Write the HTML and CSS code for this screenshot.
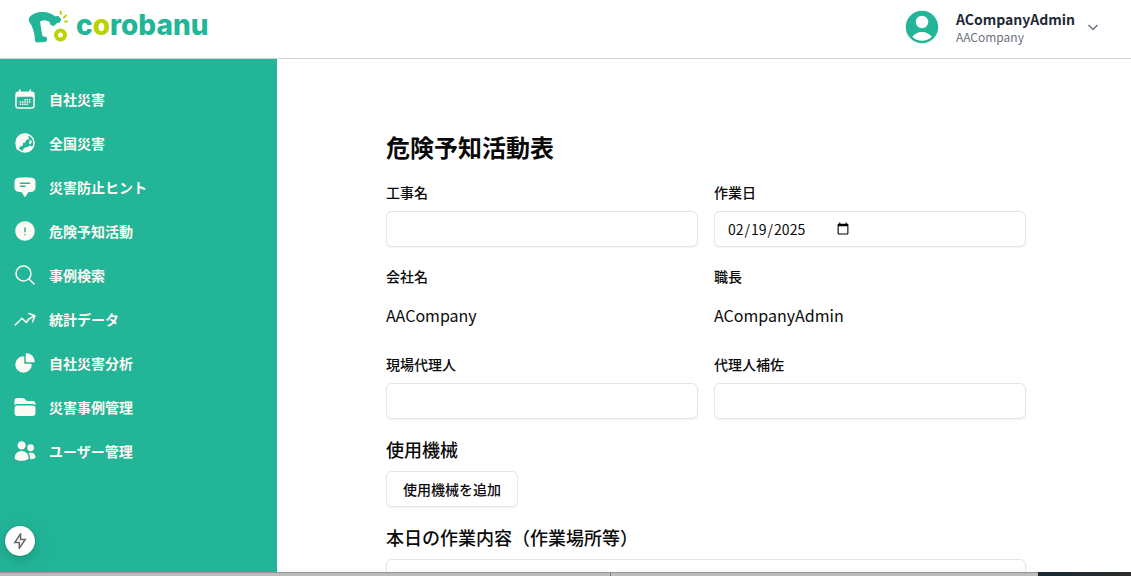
FILE: index.html
```html
<!DOCTYPE html>
<html lang="ja">
<head>
  <meta charset="UTF-8">
  <meta name="viewport" content="width=device-width, initial-scale=1">
  <title>危険予知活動表 - corobanu</title>
  <link rel="stylesheet" href="styles.css">
</head>
<body>

  <header class="header">
    <a class="logo" href="#">
      <svg class="logo-mark" viewBox="0 0 40 34" aria-hidden="true">
        <path d="M1.500 8 C5 3.500 9 2.500 15 2.500 C20 2.500 24 4.500 27 7 L30 6.500 L32.500 9.500 L31.500 12 L28.500 12.500 L25.500 15.500 L23 14.500 L22 11.500 C18.500 9 13.500 9 11.500 11.500 C12 17 13 22 14 26.500 L18 27.500 L18.500 30 L17 31.500 L8.500 32 L7.500 30.500 C7.500 24 5 16 1.500 11 Z" fill="#22b598" stroke="#22b598" stroke-width="1.200" stroke-linejoin="round"/>
        <circle cx="32.500" cy="25" r="4.500" fill="none" stroke="#b9d300" stroke-width="4"/>
        <path d="M32.500 1.500l.5 2.500M38 5.500l-2 2M39 11.500h-2" stroke="#b9d300" stroke-width="1.800" stroke-linecap="round"/>
      </svg>
      <span class="logo-text">c<span class="lime">o</span>robanu</span>
    </a>
    <button class="account" type="button">
      <svg class="avatar" viewBox="0 0 24 24" aria-hidden="true"><path fill-rule="evenodd" d="M18.685 19.097A9.723 9.723 0 0 0 21.75 12c0-5.385-4.365-9.75-9.75-9.75S2.25 6.615 2.25 12a9.723 9.723 0 0 0 3.065 7.097A9.716 9.716 0 0 0 12 21.75a9.716 9.716 0 0 0 6.685-2.653Zm-12.54-1.285A7.486 7.486 0 0 1 12 15a7.486 7.486 0 0 1 5.855 2.812A8.224 8.224 0 0 1 12 20.25a8.224 8.224 0 0 1-5.855-2.438ZM15.75 9a3.75 3.75 0 1 1-7.5 0 3.75 3.75 0 0 1 7.5 0Z"/></svg>
      <span class="account-text">
        <span class="account-name">ACompanyAdmin</span>
        <span class="account-company">AACompany</span>
      </span>
      <svg class="chevron" viewBox="0 0 12 12" aria-hidden="true"><path d="M1.500 4 6 8.500 10.500 4"/></svg>
    </button>
  </header>

  <div class="layout">
    <nav class="sidebar">
      <a class="nav-link" href="#">
        <svg class="icon" viewBox="0 0 24 24"><path fill-rule="evenodd" d="M6 3a.75.75 0 0 1 1.500 0v1.500h9V3A.75.75 0 0 1 18 3v1.500h.75a3 3 0 0 1 3 3v11.250a3 3 0 0 1-3 3H5.250a3 3 0 0 1-3-3V7.500a3 3 0 0 1 3-3H6ZM5.250 9.750a1.500 1.500 0 0 0-1.500 1.500v7.500a1.500 1.500 0 0 0 1.500 1.500h13.500a1.500 1.500 0 0 0 1.500-1.500v-7.500a1.500 1.500 0 0 0-1.500-1.500Z"/><path d="M11.300 12h1.500v1.500h-1.500zM13.600 12h1.500v1.500h-1.500zM15.900 12h1.500v1.500h-1.500zM6.700 14.300h1.500v1.500H6.700zM9 14.300h1.500v1.500H9zM11.300 14.300h1.500v1.500h-1.500zM13.600 14.300h1.500v1.500h-1.500zM15.900 14.300h1.500v1.500h-1.500zM6.700 16.600h1.500v1.500H6.700zM9 16.600h1.500v1.500H9zM11.300 16.600h1.500v1.500h-1.500zM13.600 16.600h1.500v1.500h-1.500z"/></svg>
        自社災害
      </a>
      <a class="nav-link" href="#">
        <svg class="icon" viewBox="0 0 24 24"><circle class="line" cx="12" cy="12" r="9"/><path d="M3 11C3 6 7 2.500 12 2.500l3 .5 1 1.500-1 2 1.500.5-1 1.500-2.500.5-.5 2.500-2.500.5-.5 3-2.500.5-1 2.500-2.500 1C3.500 16.500 3 14 3 11Z"/><path d="M16.500 9.500l1.500-.5 1 2-1.500 2.500-1.500-1ZM12 16.500l3-.5 1.500-1.500 2 1 1.500.5-1.500 2.500-3 2-3.500.8-2.500-2.300Z"/></svg>
        全国災害
      </a>
      <a class="nav-link" href="#">
        <svg class="icon" viewBox="0 0 24 24"><path fill-rule="evenodd" d="M4.848 2.771A49.144 49.144 0 0 1 12 2.250c2.430 0 4.817.178 7.152.52 1.978.292 3.348 2.024 3.348 3.970v6.020c0 1.946-1.370 3.678-3.348 3.970a48.901 48.901 0 0 1-3.476.383.39.39 0 0 0-.297.17l-2.755 4.133a.75.75 0 0 1-1.248 0l-2.755-4.133a.39.39 0 0 0-.297-.17 48.900 48.900 0 0 1-3.476-.384c-1.978-.29-3.348-2.024-3.348-3.970V6.741c0-1.946 1.370-3.680 3.348-3.970ZM6.750 8.250a.75.75 0 0 1 .75-.75h9a.75.75 0 0 1 0 1.500h-9a.75.75 0 0 1-.75-.75Zm.75 2.250a.75.75 0 0 0 0 1.500H12a.75.75 0 0 0 0-1.500H7.500Z"/></svg>
        災害防止ヒント
      </a>
      <a class="nav-link" href="#">
        <svg class="icon" viewBox="0 0 24 24"><path fill-rule="evenodd" d="M2.250 12c0-5.385 4.365-9.750 9.750-9.750s9.750 4.365 9.750 9.750-4.365 9.750-9.750 9.750S2.250 17.385 2.250 12ZM12 8.250a.75.75 0 0 1 .75.75v3.750a.75.75 0 0 1-1.500 0V9a.75.75 0 0 1 .75-.75Zm0 8.250a.75.75 0 1 0 0-1.500.75.75 0 0 0 0 1.500Z"/></svg>
        危険予知活動
      </a>
      <a class="nav-link" href="#">
        <svg class="icon" viewBox="0 0 24 24"><path class="line" d="m21 21-5.197-5.197m0 0A7.500 7.500 0 1 0 5.196 5.196a7.500 7.500 0 0 0 10.607 10.607Z"/></svg>
        事例検索
      </a>
      <a class="nav-link" href="#">
        <svg class="icon" viewBox="0 0 24 24"><path class="line" d="M2.250 18 9 11.250l4.306 4.306a11.950 11.950 0 0 1 5.814-5.518l2.740-1.220m0 0-5.940-2.281m5.940 2.280-2.280 5.941"/></svg>
        統計データ
      </a>
      <a class="nav-link" href="#">
        <svg class="icon" viewBox="0 0 24 24"><path d="M2.250 13.500a8.250 8.250 0 0 1 8.250-8.250.75.75 0 0 1 .75.75v6.750H18a.75.75 0 0 1 .75.75 8.250 8.250 0 0 1-16.500 0Z"/><path d="M12.750 3a.75.75 0 0 1 .75-.75 8.250 8.250 0 0 1 8.250 8.250.75.75 0 0 1-.75.75h-7.500a.75.75 0 0 1-.75-.75V3Z"/></svg>
        自社災害分析
      </a>
      <a class="nav-link" href="#">
        <svg class="icon" viewBox="0 0 24 24"><path d="M19.500 21a3 3 0 0 0 3-3v-4.500a3 3 0 0 0-3-3h-15a3 3 0 0 0-3 3V18a3 3 0 0 0 3 3h15ZM1.500 10.146V6a3 3 0 0 1 3-3h5.379a2.250 2.250 0 0 1 1.590.659l2.122 2.121c.14.141.331.22.53.22H19.500a3 3 0 0 1 3 3v1.146A4.483 4.483 0 0 0 19.500 9h-15a4.483 4.483 0 0 0-3 1.146Z"/></svg>
        災害事例管理
      </a>
      <a class="nav-link" href="#">
        <svg class="icon" viewBox="0 0 24 24"><path d="M4.500 6.375a4.125 4.125 0 1 1 8.250 0 4.125 4.125 0 0 1-8.250 0ZM14.250 8.625a3.375 3.375 0 1 1 6.750 0 3.375 3.375 0 0 1-6.750 0ZM1.500 19.125a7.125 7.125 0 0 1 14.250 0v.003l-.001.119a.75.75 0 0 1-.363.63 13.067 13.067 0 0 1-6.761 1.873c-2.472 0-4.786-.684-6.760-1.873a.75.75 0 0 1-.364-.63l-.001-.122ZM17.250 19.128l-.001.144a2.250 2.250 0 0 1-.233.96 10.088 10.088 0 0 0 5.060-1.010.75.75 0 0 0 .42-.643 4.875 4.875 0 0 0-6.957-4.611 8.586 8.586 0 0 1 1.710 5.157v.003Z"/></svg>
        ユーザー管理
      </a>
    </nav>

    <main class="main">
      <form class="form">
        <h1>危険予知活動表</h1>
        <div class="fields">
          <div class="field">
            <label for="work-name">工事名</label>
            <input class="input" id="work-name" type="text">
          </div>
          <div class="field">
            <label for="work-date">作業日</label>
            <input class="input" id="work-date" type="date" value="2025-02-19">
          </div>
          <div class="field">
            <span class="label">会社名</span>
            <p class="value">AACompany</p>
          </div>
          <div class="field">
            <span class="label">職長</span>
            <p class="value">ACompanyAdmin</p>
          </div>
          <div class="field">
            <label for="agent">現場代理人</label>
            <input class="input" id="agent" type="text">
          </div>
          <div class="field">
            <label for="assistant">代理人補佐</label>
            <input class="input" id="assistant" type="text">
          </div>
        </div>
        <section class="field">
          <h2>使用機械</h2>
          <button class="btn" type="button">使用機械を追加</button>
        </section>
        <section class="field">
          <h2 id="today-work">本日の作業内容（作業場所等）</h2>
          <textarea class="input textarea" aria-labelledby="today-work"></textarea>
        </section>
      </form>
    </main>
  </div>

  <div class="bottom-strip">
    <span class="strip-left"></span>
    <span class="strip-mid"></span>
    <span class="strip-dark"></span>
  </div>

  <button class="dev-btn" type="button" aria-label="開発ツール">
    <svg viewBox="0 0 16 16" aria-hidden="true"><path d="M8.500 .8 2.800 9.500H7.300V15.200L13.200 6.500H8.500Z"/></svg>
  </button>

</body>
</html>
```
FILE: styles.css
```css
* {
  box-sizing: border-box;
}

body {
  margin: 0;
  height: 100vh;
  display: flex;
  flex-direction: column;
  overflow: hidden;
  font-family: "Noto Sans CJK JP", sans-serif;
  font-size: 16px;
  color: #0a0a0a;
  background: #fff;
}

h1, h2, p {
  margin: 0;
}

button, input, textarea {
  font-family: inherit;
  color: inherit;
}

.header {
  display: flex;
  align-items: center;
  justify-content: space-between;
  flex: none;
  height: 59px;
  padding: 0 32px 4px 28px;
  border-bottom: 1px solid #d1d5db;
}

.logo {
  display: flex;
  align-items: center;
  gap: 8px;
  text-decoration: none;
}

.logo-mark {
  width: 40px;
  height: 34px;
}

.logo-text {
  padding-bottom: 4px;
  font-family: Inter, sans-serif;
  font-size: 28px;
  font-weight: 800;
  line-height: 32px;
  color: #22b598;
}

.lime {
  color: #b9d300;
}

.account {
  display: flex;
  align-items: center;
  padding: 0;
  border: 0;
  background: none;
  text-align: left;
  cursor: pointer;
}

.avatar {
  width: 40px;
  height: 40px;
  margin-right: 14px;
  fill: #22b598;
}

.account-text {
  display: flex;
  flex-direction: column;
  margin-right: 12px;
}

.account-name {
  font-size: 14px;
  font-weight: 700;
  line-height: 20px;
  color: #1f2937;
}

.account-company {
  font-size: 12px;
  line-height: 16px;
  color: #6b7280;
}

.chevron {
  width: 12px;
  height: 12px;
  fill: none;
  stroke: #6b7280;
  stroke-width: 1.5;
}

.layout {
  display: flex;
  flex: 1;
  min-height: 0;
}

.sidebar {
  flex: none;
  width: 277px;
  padding: 18px 13px;
  background: #22b598;
}

.nav-link {
  display: flex;
  align-items: center;
  gap: 12px;
  height: 44px;
  font-size: 14px;
  font-weight: 700;
  line-height: 20px;
  color: #fdf9f3;
  text-decoration: none;
}

.icon {
  width: 24px;
  height: 24px;
  fill: currentColor;
}

.line {
  fill: none;
  stroke: currentColor;
  stroke-width: 1.5;
  stroke-linecap: round;
  stroke-linejoin: round;
}

.main {
  flex: 1;
  padding: 72px 28px 0 32px;
  overflow: hidden;
}

.form {
  display: flex;
  flex-direction: column;
  gap: 20px;
  max-width: 640px;
  margin: 0 auto;
}

h1 {
  font-size: 24px;
  font-weight: 700;
  line-height: 32px;
}

h2 {
  font-size: 18px;
  font-weight: 500;
  line-height: 20px;
  padding-bottom: 4px;
}

.fields {
  display: grid;
  grid-template-columns: 1fr 1fr;
  gap: 20px 16px;
}

.field {
  display: flex;
  flex-direction: column;
  gap: 8px;
}

label, .label {
  padding-bottom: 2px;
  font-size: 14px;
  font-weight: 500;
  line-height: 18px;
}

.input {
  display: flex;
  width: 100%;
  height: 36px;
  padding: 4px 12px;
  border: 1px solid #e5e5e5;
  border-radius: 6px;
  background: #fff;
  box-shadow: 0 1px 2px rgba(0, 0, 0, 0.05);
  font-size: 14px;
}

.value {
  line-height: 40px;
}

.textarea {
  height: 80px;
  resize: none;
}

.btn {
  align-self: flex-start;
  height: 36px;
  padding: 0 16px;
  border: 1px solid #e5e5e5;
  border-radius: 6px;
  background: #fff;
  box-shadow: 0 1px 2px rgba(0, 0, 0, 0.05);
  font-size: 14px;
  font-weight: 500;
  cursor: pointer;
}

/* window edge under the page */
.bottom-strip {
  display: flex;
  flex: none;
  height: 4px;
}

.strip-left,
.strip-mid {
  border-top: 1px solid #959595;
  background: #bdbdbd;
}

.strip-left {
  flex: 611;
  border-right: 1px solid #777;
}

.strip-mid {
  flex: 427;
}

.strip-dark {
  flex: 93;
  background: linear-gradient(90deg, #172a35, #2d2d2d);
}

.dev-btn {
  position: fixed;
  left: 5px;
  bottom: 20px;
  display: flex;
  align-items: center;
  justify-content: center;
  width: 30px;
  height: 30px;
  padding: 0;
  border: 0;
  border-radius: 50%;
  background: #fff;
  box-shadow: 0 0 0 1px rgba(0, 0, 0, 0.1), 0 4px 12px rgba(0, 0, 0, 0.15), 0 8px 40px rgba(0, 0, 0, 0.1);
  cursor: pointer;
}

.dev-btn svg {
  width: 16px;
  height: 16px;
  fill: none;
  stroke: #666;
  stroke-width: 1.5;
}
```
